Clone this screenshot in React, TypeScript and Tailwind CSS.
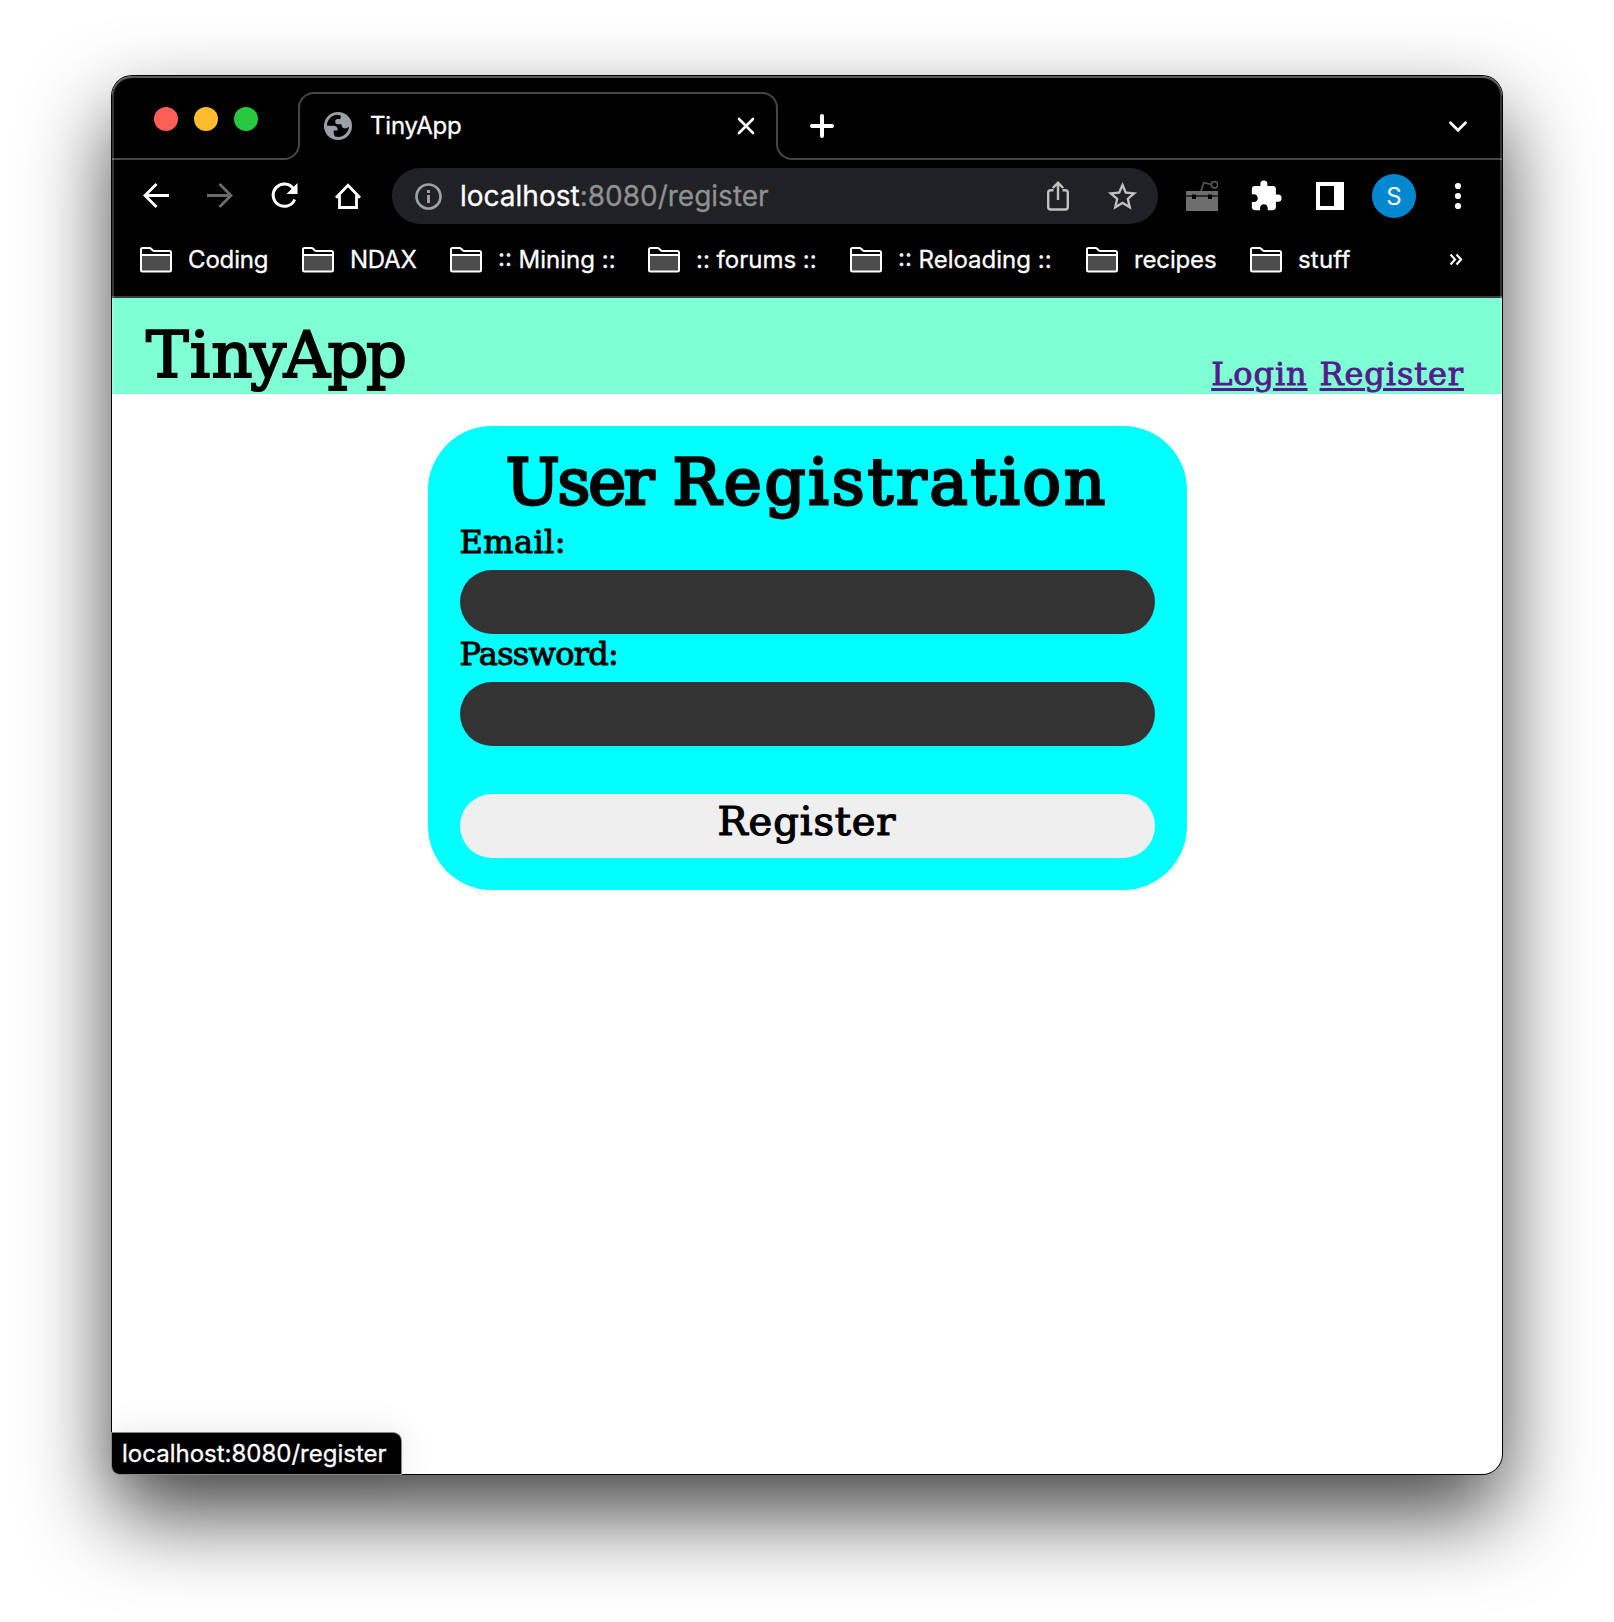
import React from "react";
import { MdExtension, MdStarBorder } from "react-icons/md";

const bookmarks = [
  { label: "Coding", box: "w-[162px]", text: "tracking-[-0.15px]" },
  { label: "NDAX", box: "w-[148px]", text: "tracking-[-0.25px]" },
  { label: ":: Mining ::", box: "w-[198px]", text: "tracking-[0px]" },
  { label: ":: forums ::", box: "w-[202px]", text: "tracking-[0px]" },
  { label: ":: Reloading ::", box: "w-[236px]", text: "tracking-[0px]" },
  { label: "recipes", box: "w-[164px]", text: "tracking-[-0.15px]" },
  { label: "stuff", box: "w-[110px]", text: "tracking-[0.2px]" },
];

function Folder() {
  return (
    <svg width="32" height="26" viewBox="0 0 32 26" className="shrink-0">
      <path d="M2 8H30V24H2Z" fill="#4d4d4d" />
      <path
        d="M1 2.5Q1 1 2.5 1H9.5Q10.5 1 11.2 1.8L12.6 3.2Q13.4 4 14.5 4H29.5Q31 4 31 5.5V23Q31 24.5 29.5 24.5H2.5Q1 24.5 1 23Z"
        fill="none"
        stroke="#fff"
        strokeWidth="2"
      />
      <path d="M1 8H31" stroke="#fff" strokeWidth="2" />
    </svg>
  );
}

function Globe() {
  return (
    <svg width="28" height="28" viewBox="0 0 28 28" className="shrink-0">
      <circle cx="14" cy="14" r="14" fill="#9aa0a6" />
      <path
        d="M13.5 2.8C7.6 3 3 7.800 3 13.700H9.500C12 13.700 13.600 15 13.600 17V18.500H9.700V21.200C9.700 22 10.200 22.800 11 24.600C18 26.500 24.500 21.500 25 14.500C23.500 16 21.800 16.800 20 16.300C18.200 15.800 17.800 14.200 17.300 12.200H13.800C11.800 12.200 11.200 11 11.200 9.500C11.200 7.500 12.500 7 14.500 7H16.200C16.800 6 17 4.500 16.600 3.400Z"
        fill="#000"
      />
    </svg>
  );
}

function TabStrip() {
  return (
    <div className="flex h-[84px]">
      <div className="relative w-[188px] shrink-0">
        <span className="absolute inset-x-0 bottom-0 h-[34px] rounded-br-[16px] border-r-2 border-b-2 border-[#474747]" />
        <div className="flex gap-4 pt-[31px] pl-[42px]">
          <span className="size-6 rounded-full bg-[#ff5f57]" />
          <span className="size-6 rounded-full bg-[#febc2e]" />
          <span className="size-6 rounded-full bg-[#28c840]" />
        </div>
      </div>
      <div className="relative mt-4 -ml-0.5 flex h-[68px] w-[480px] shrink-0 items-center pr-[23px] pl-[26px]">
        <span className="absolute inset-x-0 top-0 h-[36px] rounded-t-[16px] border-x-2 border-t-2 border-[#474747]" />
        <Globe />
        <span className="ml-[18px] text-2xl leading-none tracking-[-0.2px] text-white">TinyApp</span>
        <svg width="18" height="18" viewBox="0 0 18 18" className="ml-auto">
          <path d="M2 2L16 16M16 2L2 16" stroke="#fff" strokeWidth="2.6" strokeLinecap="round" />
        </svg>
      </div>
      <div className="relative -ml-0.5 flex grow items-start justify-between pt-[38px] pr-[34px] pl-[34px]">
        <span className="absolute inset-x-0 bottom-0 h-[34px] rounded-bl-[16px] border-b-2 border-l-2 border-[#474747]" />
        <svg width="24" height="24" viewBox="0 0 24 24">
          <path d="M12 2V22M2 12H22" stroke="#fff" strokeWidth="4" strokeLinecap="round" />
        </svg>
        <svg width="20" height="24" viewBox="0 0 20 24">
          <path d="M2.500 8.800L10 16.300L17.500 8.800" fill="none" stroke="#fff" strokeWidth="2.800" strokeLinecap="round" />
        </svg>
      </div>
    </div>
  );
}

function Cell({ children }: { children: React.ReactNode }) {
  return <div className="flex w-16 shrink-0 items-center justify-center">{children}</div>;
}

function Toolbar() {
  return (
    <div className="flex h-[72px] items-center px-3 text-white">
      <Cell>
        <svg width="26" height="26" viewBox="0 0 26 26" fill="none" stroke="#fff" strokeWidth="2.800" className="-ml-px">
          <path d="M26 12.500H2M13.500 1L2 12.500L13.500 24" />
        </svg>
      </Cell>
      <Cell>
        <svg width="26" height="26" viewBox="0 0 26 26" fill="none" stroke="#6b6b6b" strokeWidth="2.800">
          <path d="M0 12.500H24M12.500 1L24 12.500L12.500 24" />
        </svg>
      </Cell>
      <Cell>
        <svg width="28" height="28" viewBox="0 0 28 28">
          <path d="M23.500 6.600A11.200 11.200 0 1 0 24.700 17.500" fill="none" stroke="#fff" strokeWidth="3" />
          <path d="M27.500 1V12H16.500Z" fill="#fff" />
        </svg>
      </Cell>
      <Cell>
        <svg width="26" height="26" viewBox="0 0 26 26" fill="none" stroke="#fff" strokeWidth="2.800">
          <path d="M1 14.800L13 2.300L25 14.800M4.500 12V24.500H21.500V12" />
        </svg>
      </Cell>
      <div className="ml-3 flex h-14 w-[766px] shrink-0 items-center rounded-full bg-[#202124] pr-[18px] pl-[23px]">
        <svg width="27" height="27" viewBox="0 0 27 27">
          <circle cx="13.500" cy="13.500" r="12" fill="none" stroke="#9aa0a6" strokeWidth="2.700" />
          <path d="M13.500 12V20M13.500 7V10" stroke="#9aa0a6" strokeWidth="3" />
        </svg>
        <span className="ml-[18px] text-[28px] leading-none text-white">
          localhost<span className="text-[#8f9093]">:8080/register</span>
        </span>
        <svg width="22" height="30" viewBox="0 0 22 30" className="ml-auto" fill="none" stroke="#c0c0c0" strokeWidth="2.400">
          <path d="M6.500 9.200H3.700Q1.200 9.200 1.200 11.700V26Q1.200 28.500 3.700 28.500H18.300Q20.800 28.500 20.800 26V11.700Q20.800 9.200 18.300 9.200H15.500M11 19V2.500M5.800 7L11 1.800L16.200 7" />
        </svg>
        <MdStarBorder size={35} color="#c0c0c0" className="ml-[36px]" />
      </div>
      <div className="ml-3 flex items-center">
        <Cell>
          <svg width="32" height="32" viewBox="0 0 32 32">
            <path d="M15 11L17.800 2.500L25 4.500" fill="none" stroke="#555" strokeWidth="1.700" />
            <circle cx="28.500" cy="4.800" r="3.200" fill="none" stroke="#555" strokeWidth="1.700" />
            <path d="M0 11H32V31H0Z" fill="#6e6e6e" />
            <path d="M0 16H32" stroke="#111" strokeWidth="1.400" />
            <path d="M6 14.500H10V19H6ZM22 14.500H26V19H22Z" fill="#000" />
          </svg>
        </Cell>
        <Cell>
          <MdExtension size={34} />
        </Cell>
        <Cell>
          <span className="h-7 w-7 border-4 border-r-[10px] border-white" />
        </Cell>
        <Cell>
          <span className="flex size-11 items-center justify-center rounded-full bg-[#0288d1] pt-px text-2xl [-webkit-text-stroke:0]">S</span>
        </Cell>
        <Cell>
          <svg width="8" height="28" viewBox="0 0 8 28" fill="#fff">
            <circle cx="4" cy="4" r="3.100" />
            <circle cx="4" cy="14" r="3.100" />
            <circle cx="4" cy="24" r="3.100" />
          </svg>
        </Cell>
      </div>
    </div>
  );
}

function BookmarksBar() {
  return (
    <div className="flex h-[66px] items-start border-b-2 border-[#3c3c3c] pt-[15px] pl-7">
      {bookmarks.map((b) => (
        <div key={b.label} className={`flex h-[26px] shrink-0 items-center gap-4 ${b.box}`}>
          <Folder />
          <span className={`text-2xl leading-none whitespace-pre text-white ${b.text}`}>{b.label}</span>
        </div>
      ))}
      <svg width="14" height="26" viewBox="0 0 14 26" className="mr-[39px] ml-auto" fill="none" stroke="#fff" strokeWidth="2.200">
        <path d="M1.500 7.500L6 12.500L1.500 17.500M7.500 7.500L12 12.500L7.500 17.500" />
      </svg>
    </div>
  );
}

export default function App() {
  return (
    <div className="flex h-[1622px] w-[1614px] items-start overflow-hidden bg-white pt-[76px] pl-[112px] font-['Inter',sans-serif]">
      <div className="relative flex h-[1398px] w-[1390px] flex-col rounded-[20px] bg-white shadow-[0_0_0_1px_#000,0_40px_86px_rgba(0,0,0,0.73)]">
        <div className="rounded-t-[20px] bg-black [-webkit-text-stroke:0.300px_currentColor]">
          <TabStrip />
          <Toolbar />
          <BookmarksBar />
        </div>

        <header className="flex h-24 shrink-0 justify-between bg-[#7fffd4] pr-[38px] pl-[34px] font-['DejaVu_Serif',serif]">
          <h1 className="pt-[20px] text-[64px] leading-[75px] [-webkit-text-stroke:2px_#000]">
            <span className="tracking-[1px]">Ti</span>
            <span className="tracking-[-2.400px]">nyApp</span>
          </h1>
          <nav className="flex items-end gap-3 text-[32px] leading-[40px] tracking-[0.900px] text-[#551a8b] [-webkit-text-stroke:0.900px_#551a8b]">
            <a className="underline decoration-[3px] underline-offset-[3px]">Login</a>
            <a className="underline decoration-[3px] underline-offset-[3px]">Register</a>
          </nav>
        </header>

        <main className="mt-8 flex justify-center font-['DejaVu_Serif',serif]">
          <form className="flex h-[464px] w-[759px] flex-col rounded-[64px] bg-[#00ffff] p-8">
            <h2 className="h-16 text-center text-[64px] leading-[49px] font-normal whitespace-nowrap [-webkit-text-stroke:2.800px_#000]">
              <span className="tracking-[-2.200px]">User</span> <span className="tracking-[2.900px]">Registration</span>
            </h2>
            <label className="h-12 text-[32px] leading-[40px] tracking-[0.400px] [-webkit-text-stroke:1px_#000]">Email:</label>
            <span className="h-16 rounded-full bg-[#333]" />
            <label className="h-12 text-[32px] leading-[40px] tracking-[-0.750px] [-webkit-text-stroke:1px_#000]">Password:</label>
            <span className="h-16 rounded-full bg-[#333]" />
            <button
              type="button"
              className="mt-12 h-16 rounded-full bg-[#efefef] pb-2.5 text-[40px] leading-none tracking-[0.900px] [-webkit-text-stroke:1.200px_#000]"
            >
              Register
            </button>
          </form>
        </main>

        <span className="pointer-events-none absolute inset-0 rounded-[20px] shadow-[inset_0_2px_0_rgba(255,255,255,0.2),inset_0_0_0_2px_rgba(255,255,255,0.2)]" />
        <div className="absolute bottom-0 left-0 flex h-[41px] w-[289px] items-center rounded-tr-[8px] rounded-bl-[8px] bg-black pl-[10px] text-2xl leading-none text-white shadow-[0_0_0_1px_#888,0_0_36px_rgba(0,0,0,0.1)] [-webkit-text-stroke:0.300px_#fff]">
          localhost:8080/register
        </div>
      </div>
    </div>
  );
}
